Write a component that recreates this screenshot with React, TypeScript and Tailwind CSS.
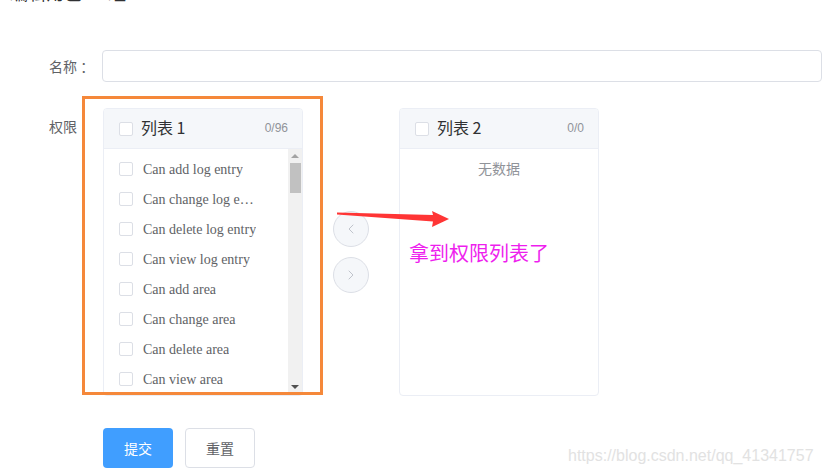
import { ChevronLeft, ChevronRight } from "lucide-react";

const items = [
  "Can add log entry",
  "Can change log entry",
  "Can delete log entry",
  "Can view log entry",
  "Can add area",
  "Can change area",
  "Can delete area",
  "Can view area",
  "Can add user",
];

const cjk = { fontFamily: '"Noto Sans CJK SC", "Noto Sans", sans-serif' };
const serif = { fontFamily: '"Liberation Serif", "Noto Sans CJK SC", serif' };
const sans = { fontFamily: '"Liberation Sans", "Noto Sans CJK SC", sans-serif' };

function Box() {
  return <span className="block h-[14px] w-[14px] shrink-0 rounded-[2px] border border-[#dcdfe6] bg-white" />;
}

function PanelHeader({ title, count }: { title: string; count: string }) {
  return (
    <div className="flex h-[40px] shrink-0 items-center border-b border-[#ebeef5] bg-[#f5f7fa] pl-[15px] pr-[14px]">
      <Box />
      <span className="-mt-[3px] ml-[8px] text-[16px] leading-[20px] text-[#303133]" style={cjk}>
        {title}
      </span>
      <span className="-mt-[2px] ml-auto text-[12px] text-[#909399]" style={sans}>
        {count}
      </span>
    </div>
  );
}

export default function App() {
  return (
    <div className="relative h-[475px] w-[822px] overflow-hidden bg-white">
      {/* cut off title */}
      <div className="h-[3px] overflow-hidden pl-[10px]">
        <div className="-mt-[19px] text-[18px] leading-[22px] text-[#303133]" style={cjk}>
          编辑角色 · 组
        </div>
      </div>

      <div className="pl-[49px] pt-[47px]">
        <div className="flex items-center">
          <div className="w-[54px] text-[14px] text-[#606266]" style={cjk}>
            名称 ：
          </div>
          <div className="h-[32px] w-[740px] rounded-[4px] border border-[#dcdfe6] bg-white" />
        </div>

        <div className="mt-[26px] flex">
          <div className="-mt-[2px] w-[54px] text-[14px] leading-[40px] text-[#606266]" style={cjk}>
            权限
          </div>
          <div className="flex items-center">
            <div className="flex h-[288px] w-[200px] flex-col overflow-hidden rounded-[4px] border border-[#ebeef5] bg-white">
              <PanelHeader title="列表 1" count="0/96" />
              <div className="flex min-h-0 flex-1">
                <div className="flex-1 overflow-hidden pt-[5px]">
                  {items.map((t) => (
                    <div key={t} className="flex h-[30px] items-center pl-[15px]">
                      <Box />
                      <span
                        className="ml-[10px] max-w-[114px] truncate text-[14px] text-[#606266]"
                        style={serif}
                      >
                        {t}
                      </span>
                    </div>
                  ))}
                </div>
                <div className="flex w-[14px] flex-col items-center bg-[#f1f1f1]">
                  <span className="mt-[5px] h-0 w-0 border-x-[4px] border-b-[4px] border-x-transparent border-b-[#a3a3a3]" />
                  <span className="mt-[5px] h-[30px] w-[11px] bg-[#c1c1c1]" />
                  <span className="mb-[6px] mt-auto h-0 w-0 border-x-[4px] border-t-[4px] border-x-transparent border-t-[#505050]" />
                </div>
              </div>
            </div>

            <div className="mx-[30px] flex flex-col gap-[10px]">
              <div className="flex h-[36px] w-[36px] items-center justify-center rounded-full border border-[#dcdfe6] bg-[#f5f7fa]">
                <ChevronLeft className="h-[16px] w-[16px] text-[#c0c4cc]" strokeWidth={1.5} />
              </div>
              <div className="flex h-[36px] w-[36px] items-center justify-center rounded-full border border-[#dcdfe6] bg-[#f5f7fa]">
                <ChevronRight className="h-[16px] w-[16px] text-[#c0c4cc]" strokeWidth={1.5} />
              </div>
            </div>

            <div className="flex h-[288px] w-[200px] flex-col overflow-hidden rounded-[4px] border border-[#ebeef5] bg-white">
              <PanelHeader title="列表 2" count="0/0" />
              <div className="pt-[9px] text-center text-[14px] leading-[20px] text-[#909399]" style={cjk}>
                无数据
              </div>
            </div>
          </div>
        </div>

        <div className="ml-[54px] mt-[32px] flex gap-[12px]">
          <button className="h-[40px] w-[70px] rounded-[4px] bg-[#409eff] text-[14px] text-white" style={cjk}>
            提交
          </button>
          <button
            className="h-[40px] w-[70px] rounded-[4px] border border-[#dcdfe6] bg-white text-[14px] text-[#606266]"
            style={cjk}
          >
            重置
          </button>
        </div>
      </div>

      {/* annotations */}
      <div className="pointer-events-none absolute left-[82px] top-[96px] h-[299px] w-[241px] border-[3px] border-[#f5883a]" />
      <svg className="pointer-events-none absolute left-0 top-0" width="822" height="475">
        <polygon
          points="337,212.5 433,215 432,211 449,219 432,227 433,221.5 337,214.5"
          fill="#ff3535"
        />
      </svg>
      <div
        className="pointer-events-none absolute left-[409px] top-[240px] text-[20px] leading-[26px] text-[#ee1eee]"
        style={cjk}
      >
        拿到权限列表了
      </div>
      <div
        className="pointer-events-none absolute left-[568px] top-[446px] text-[16px] leading-[20px] text-[#e2e2e2]"
        style={{ fontFamily: '"Liberation Sans Narrow", "Liberation Sans", sans-serif' }}
      >
        https://blog.csdn.net/qq_41341757
      </div>
    </div>
  );
}
